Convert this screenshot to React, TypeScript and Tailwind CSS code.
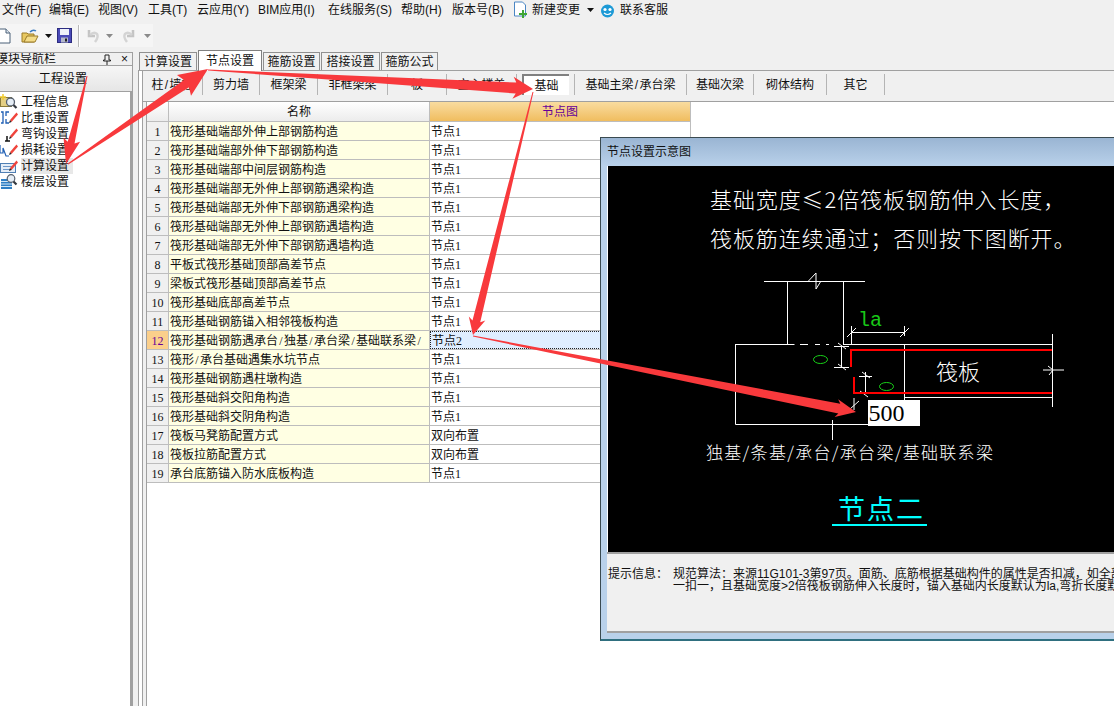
import React from 'react'

const MENUS = [
  { label: '文件(F)', w: 'w-[47px]' },
  { label: '编辑(E)', w: 'w-[49px]' },
  { label: '视图(V)', w: 'w-[50px]' },
  { label: '工具(T)', w: 'w-[49px]' },
  { label: '云应用(Y)', w: 'w-[61px]' },
  { label: 'BIM应用(I)', w: 'w-[70px]' },
  { label: '在线服务(S)', w: 'w-[73px]' },
  { label: '帮助(H)', w: 'w-[51px]' },
  { label: '版本号(B)', w: 'w-[61px]' },
]

const TREE = ['工程信息', '比重设置', '弯钩设置', '损耗设置', '计算设置', '楼层设置']

const TABS = [
  { label: '计算设置', w: 'w-[58px]' },
  { label: '节点设置', w: 'w-[64px]' },
  { label: '箍筋设置', w: 'w-[57px]' },
  { label: '搭接设置', w: 'w-[59px]' },
  { label: '箍筋公式', w: 'w-[57px]' },
]

const SUBTABS = [
  { label: '柱/墙柱', w: 'w-[60px]' },
  { label: '剪力墙', w: 'w-[57px]' },
  { label: '框架梁', w: 'w-[58px]' },
  { label: '非框架梁', w: 'w-[70px]' },
  { label: '板', w: 'w-[59px]' },
  { label: '空心楼盖', w: 'w-[70px]' },
  { label: '基础', w: 'w-[58px]', active: true },
  { label: '基础主梁/承台梁', w: 'w-[112px]' },
  { label: '基础次梁', w: 'w-[67px]' },
  { label: '砌体结构', w: 'w-[73px]' },
  { label: '其它', w: 'w-[58px]' },
]

const ROWS = [
  ['筏形基础端部外伸上部钢筋构造', '节点1'],
  ['筏形基础端部外伸下部钢筋构造', '节点1'],
  ['筏形基础端部中间层钢筋构造', '节点1'],
  ['筏形基础端部无外伸上部钢筋遇梁构造', '节点1'],
  ['筏形基础端部无外伸下部钢筋遇梁构造', '节点1'],
  ['筏形基础端部无外伸上部钢筋遇墙构造', '节点1'],
  ['筏形基础端部无外伸下部钢筋遇墙构造', '节点1'],
  ['平板式筏形基础顶部高差节点', '节点1'],
  ['梁板式筏形基础顶部高差节点', '节点1'],
  ['筏形基础底部高差节点', '节点1'],
  ['筏形基础钢筋锚入相邻筏板构造', '节点1'],
  ['筏形基础钢筋遇承台/独基/承台梁/基础联系梁/', '节点2'],
  ['筏形/承台基础遇集水坑节点', '节点1'],
  ['筏形基础钢筋遇柱墩构造', '节点1'],
  ['筏形基础斜交阳角构造', '节点1'],
  ['筏形基础斜交阴角构造', '节点1'],
  ['筏板马凳筋配置方式', '双向布置'],
  ['筏板拉筋配置方式', '双向布置'],
  ['承台底筋锚入防水底板构造', '节点1'],
]

// tapered markup arrow: hairline at the tail, fat at the neck
const arrowPoints = (x0: number, y0: number, x1: number, y1: number, neck = 6, head = 18, len = 20) => {
  const d = Math.hypot(x1 - x0, y1 - y0)
  const ux = (x1 - x0) / d
  const uy = (y1 - y0) / d
  const nx = -uy
  const ny = ux
  const bx = x1 - ux * len
  const by = y1 - uy * len
  const p = (x: number, y: number, s: number) => `${x + nx * s},${y + ny * s}`
  return [
    p(x0, y0, 0.5),
    p(bx, by, neck / 2),
    p(bx - ux * 3, by - uy * 3, head / 2),
    `${x1},${y1}`,
    p(bx - ux * 3, by - uy * 3, -head / 2),
    p(bx, by, -neck / 2),
    p(x0, y0, -0.5),
  ].join(' ')
}

// slashes are half an em wide in the app's font
const Slashed = ({ text }: { text: string }) => (
  <>
    {text.split('/').map((part, i) => (
      <React.Fragment key={i}>
        {i > 0 && <span className="inline-block w-[6px] text-center">/</span>}
        {part}
      </React.Fragment>
    ))}
  </>
)

const Caret = ({ gray }: { gray?: boolean }) => (
  <svg width="7" height="4" viewBox="0 0 7 4"><path d="M0 0h7L3.500 4z" fill={gray ? '#8a8a8a' : '#111'} /></svg>
)

const TreeIcon = ({ i }: { i: number }) => {
  const pencil = (
    <>
      <path d="M10 10 16.500 2.500 18 4.500 11.500 12z" fill="#f0443c" />
      <path d="m9 13 1-3 1.500 2z" fill="#222" />
    </>
  )
  if (i === 0) {
    return (
      <svg width="18" height="16" viewBox="0 0 18 16">
        <rect x="0.500" y="3.500" width="11" height="9" fill="#e4cf84" stroke="#8a7a3a" />
        <path d="M3 0v6M0 3h6" stroke="#f2cc30" strokeWidth="1.500" />
        <circle cx="10.500" cy="8" r="4" fill="#e6eef6" stroke="#56606e" strokeWidth="1.300" />
        <path d="m13.500 11 3 3" stroke="#33383f" strokeWidth="2.200" />
      </svg>
    )
  }
  if (i === 1) {
    return (
      <svg width="18" height="16" viewBox="0 0 18 16">
        <path d="M1 2h2v11H1M9 2H6v4M6 9v4h3" fill="none" stroke="#1f5fb4" strokeWidth="1.300" />
        {pencil}
      </svg>
    )
  }
  if (i === 2) {
    return (
      <svg width="18" height="16" viewBox="0 0 18 16">
        <path d="M7 10v5M5 15h5" fill="none" stroke="#111" strokeWidth="1.500" />
        {pencil}
      </svg>
    )
  }
  if (i === 3) {
    return (
      <svg width="18" height="16" viewBox="0 0 18 16">
        <path d="M0 3v8h3V6l3 8h3" fill="none" stroke="#1f5fb4" strokeWidth="1.200" />
        {pencil}
      </svg>
    )
  }
  if (i === 4) {
    return (
      <svg width="18" height="16" viewBox="0 0 18 16">
        <rect x="0.500" y="5.500" width="15" height="9" fill="#e4edf7" stroke="#4f7fb4" />
        <path d="M3 8.500h9M3 11.500h9" stroke="#6c97c8" />
        {pencil}
      </svg>
    )
  }
  return (
    <svg width="18" height="16" viewBox="0 0 18 16">
      <path d="M1 5h11v10H1z" fill="#2f7fc4" />
      <path d="M1 7.500h11M1 10h11M1 12.500h11" stroke="#d4e8f6" />
      <circle cx="11" cy="4.500" r="3.800" fill="#e6eef6" stroke="#56606e" strokeWidth="1.200" />
      <path d="m13.500 7.500 3 3" stroke="#33383f" strokeWidth="2.200" />
    </svg>
  )
}

const MenuBar = () => (
  <div className="flex h-[20px] items-center pl-[2px] text-[12px] text-[#111]">
    {MENUS.map(m => (
      <div key={m.label} className={`${m.w} whitespace-nowrap`}>{m.label}</div>
    ))}
    <svg width="15" height="18" viewBox="0 0 15 18">
      <path d="M1.500 1h8l3 3v11h-11z" fill="#fff" stroke="#4a86c4" />
      <path d="M6 12h3V9h2v3h3v2h-3v3H9v-3H6z" fill="#3fa535" />
    </svg>
    <div className="ml-[4px] w-[48px] whitespace-nowrap">新建变更</div>
    <div className="ml-[7px]"><Caret /></div>
    <svg className="ml-[6px]" width="15" height="15" viewBox="0 0 15 15">
      <circle cx="7.500" cy="8" r="6.500" fill="#1d9ad6" />
      <circle cx="5" cy="6.500" r="1.600" fill="#fff" />
      <circle cx="10" cy="6.500" r="1.600" fill="#fff" />
      <path d="M4 10q3.500 3 7 0" fill="none" stroke="#fff" strokeWidth="1.200" />
    </svg>
    <div className="ml-[5px] whitespace-nowrap">联系客服</div>
  </div>
)

const ToolBar = () => (
  <div className="mt-[4px] flex h-[23px] w-[153px] items-center bg-[#f5f5f5]">
    <svg className="ml-[-3px]" width="14" height="16" viewBox="0 0 14 16">
      <path d="M1 1h8l4 4v10H1z" fill="#fff" stroke="#4a6078" />
      <path d="M9 1v4h4" fill="#dfe6ee" stroke="#4a6078" />
    </svg>
    <svg className="ml-[10px]" width="18" height="16" viewBox="0 0 18 16">
      <path d="M1 5h5l1 1h6v8H1z" fill="#e8c860" stroke="#9a7a28" />
      <path d="M3 14 6 8h11l-3 6z" fill="#f4dc88" stroke="#9a7a28" />
      <path d="M9 4q3-3 6-1" fill="none" stroke="#3a7ac0" strokeWidth="1.500" />
    </svg>
    <div className="ml-[6px]"><Caret /></div>
    <svg className="ml-[5px]" width="15" height="15" viewBox="0 0 15 15">
      <rect x="0.500" y="0.500" width="14" height="14" fill="#4a4ab8" stroke="#2c2c80" />
      <rect x="3" y="1" width="9" height="6" fill="#eef1fa" />
      <rect x="4" y="9.500" width="7" height="5" fill="#b4b8cc" />
      <rect x="8" y="10.500" width="2" height="3" fill="#222" />
    </svg>
    <div className="ml-[6px] h-[22px] w-[2px] border-l border-[#b8b8b8] bg-white" />
    <svg className="ml-[7px]" width="14" height="14" viewBox="0 0 14 14">
      <path d="M2 1v6h6" fill="none" stroke="#c4c4c4" strokeWidth="2.500" />
      <path d="M3 6q4-4 7-1 2 3-2 8" fill="none" stroke="#d4d4d4" strokeWidth="2.500" />
    </svg>
    <div className="ml-[5px]"><Caret gray /></div>
    <svg className="ml-[8px]" width="14" height="14" viewBox="0 0 14 14">
      <path d="M12 1v6H6" fill="none" stroke="#c4c4c4" strokeWidth="2.500" />
      <path d="M11 6Q7 2 4 5q-2 3 2 8" fill="none" stroke="#d4d4d4" strokeWidth="2.500" />
    </svg>
    <div className="ml-[9px]"><Caret gray /></div>
  </div>
)

const NavPanel = () => (
  <div className="flex h-full w-[133px] shrink-0 flex-col border-r border-[#a0a0a0]">
    <div className="flex h-[14px] items-center overflow-hidden border-y border-[#a0a0a0] text-[12px]">
      <span className="ml-[-4px] w-[106px] whitespace-nowrap">模块导航栏</span>
      <svg width="10" height="11" viewBox="0 0 10 11">
        <path d="M3 1h4v5h1.500v1h-7V6H3zM5 7v4" fill="none" stroke="#222" />
      </svg>
      <span className="ml-[9px] text-[12px] leading-none">×</span>
    </div>
    <div className="flex h-[25px] items-center justify-center pr-[6px] text-[12px] tracking-[0.1px] bg-gradient-to-b from-[#f6f6f6] to-[#e6e6e6]">
      工程设置
    </div>
    <div className="flex-1 border-t border-r-2 border-[#a0a0a0] bg-white pt-[2px] text-[12px]">
      {TREE.map((t, i) => (
        <div key={t} className="flex h-[16px] items-center">
          <div className="flex w-[21px] shrink-0"><TreeIcon i={i} /></div>
          <span className={i === 4 ? 'bg-[#e8e8e8] pr-[4px] leading-[16px]' : 'leading-[16px]'}>{t}</span>
        </div>
      ))}
    </div>
  </div>
)

const Tabs = () => (
  <div className="flex h-[18px] items-end gap-[1px] pl-[6px]">
    {TABS.map(t =>
      t.label === '节点设置' ? (
        <div key={t.label} className={`${t.w} z-10 mb-[-1px] flex h-[21px] shrink-0 items-center justify-center border border-b-0 border-[#808080] bg-white text-[12px]`}>
          {t.label}
        </div>
      ) : (
        <div key={t.label} className={`${t.w} flex h-[18px] shrink-0 items-center justify-center border border-b-0 border-[#909090] bg-[#f0f0f0] text-[12px]`}>
          {t.label}
        </div>
      ),
    )}
  </div>
)

const SubTabs = () => (
  <div className="flex h-[31px] items-start border-b border-[#a0a0a0] pt-[3px]">
    {SUBTABS.map(s => (
      <div key={s.label} className={`${s.w} flex h-[21px] shrink-0 items-center justify-center border-r border-[#b4b4b4] text-[12px]`}>
        {s.active ? (
          <div className="flex h-[21px] w-[47px] items-center justify-center border-2 border-b-0 border-r-0 border-[#808080] bg-white">{s.label}</div>
        ) : <span><Slashed text={s.label} /></span>}
      </div>
    ))}
  </div>
)

const Grid = () => (
  <div className="w-[544px] text-[12px]" style={{ fontFamily: '"Liberation Serif", "Noto Sans CJK SC", serif' }}>
    <div className="grid h-[20px] grid-cols-[22px_261px_261px] border-b border-[#bdbdbd]">
      <div className="border-r border-[#bdbdbd] bg-gradient-to-b from-white to-[#ececec]" />
      <div className="flex items-center justify-center border-r border-[#bdbdbd] bg-gradient-to-b from-white to-[#ececec] pt-[1px]">名称</div>
      <div className="flex items-center justify-center border-r border-[#bdbdbd] bg-gradient-to-b from-[#f9dc9f] to-[#f0bd5e] pt-[1px] text-[#660099]">节点图</div>
    </div>
    {ROWS.map((r, i) => {
      const sel = i === 11
      return (
        <div key={i} className="grid h-[19px] grid-cols-[22px_261px_261px] grid-rows-[18px] border-b border-[#bdbdbd]">
          <div className={`flex items-center justify-center border-r border-[#bdbdbd] pt-[1px] ${sel ? 'bg-[#fbcf8b] text-[#660099]' : 'bg-[#f0f0f0]'}`}>{i + 1}</div>
          <div className="h-[18px] overflow-hidden whitespace-nowrap border-r border-[#bdbdbd] bg-[#ffffe3] pl-[1px] pt-[1px] leading-[18px]"><Slashed text={r[0]} /></div>
          <div className={`flex items-center pl-[1px] pt-[1px] ${sel ? 'border border-dotted border-[#222] bg-[#dfeeff]' : 'border-r border-[#bdbdbd]'}`}>{r[1]}</div>
        </div>
      )
    })}
  </div>
)

const Drawing = () => (
  <svg width="506" height="178" viewBox="608 262 506 178" className="block shrink-0">
    <g stroke="#fff" fill="none">
      <path d="M764 281.500h101M787.500 281v63M843.500 281v63" />
      <path d="M808 281.500 816 273v16l5-8" />
      <path d="M735.500 344v80.500h133M735.500 344.500h59M843 344.500h209.500M800 344.500h8M815 344.500h5M826 344.500h3" />
      <path d="M904.500 344v56M905 397.500h147M1052.500 334v73" />
      <path d="M851.500 332.500h53M851.500 326v18M904.500 326v10M847 337l9-9M900 337l9-9" />
      <path d="M834 346.500h15M834 367.500h15M841.500 346v21M838 343l8 6M838 364l8 6" />
      <path d="M859 376.500h13M859 393.500h13M865.500 372v22M862 372l8 6M860 391l8 6" />
      <path d="M854 398v12M850 409l9-8" />
      <path d="M1043 370h21M1048 366l5 4-4 5" />
      <path d="M832.500 420v20" />
    </g>
    <g stroke="#ff0000" strokeWidth="2" fill="none">
      <path d="M851 367v-17h201" />
      <path d="M854 377v16h198" />
    </g>
    <ellipse cx="820.500" cy="359.500" rx="7" ry="4" stroke="#18d018" fill="none" />
    <ellipse cx="886.500" cy="386.500" rx="7" ry="4" stroke="#18d018" fill="none" />
    <text x="870" y="326" textAnchor="middle" fontSize="20" fill="#18c818" fontFamily="Liberation Mono, monospace">la</text>
    <text x="958" y="380" textAnchor="middle" fontSize="22" fontWeight="300" fill="#fff" fontFamily="Noto Sans CJK SC, sans-serif">筏板</text>
    <rect x="868" y="400" width="52" height="26" fill="#fff" />
    <text x="868.500" y="421" fontSize="24" fill="#000" fontFamily="Liberation Serif, serif">500</text>
  </svg>
)

const NodeDialog = () => (
  <div className="absolute left-[600px] top-[137px] z-10 flex h-[504px] w-[514px] flex-col overflow-hidden border-l border-t border-b-2 border-[#3a4a50] border-b-[#2f6f7f] bg-[#b9d1ea] pl-[6px]">
    <div className="ml-[-6px] flex h-[28px] shrink-0 items-center bg-gradient-to-b from-[#9ab5d3] to-[#b9d1ea] pl-[6px] text-[12px] text-[#111]">
      节点设置示意图
    </div>
    <div
      className="flex h-[386px] shrink-0 flex-col items-start border-l border-white bg-black text-white"
      style={{ fontFamily: '"Noto Sans CJK SC", sans-serif' }}
    >
      <div className="pb-[5px] pl-[102px] pt-[13px] text-[22px] font-light leading-[39px] tracking-[0.9px] whitespace-nowrap">
        <p>基础宽度≤2倍筏板钢筋伸入长度，</p>
        <p>筏板筋连续通过；否则按下图断开。</p>
      </div>
      <Drawing />
      <p className="ml-[98px] text-[17px] font-light leading-[24px] tracking-[1.3px] whitespace-nowrap">独基/条基/承台/承台梁/基础联系梁</p>
      <p className="ml-[224px] mt-[28px] border-b-2 border-[#00ffff] pl-[6px] pr-[2px] text-[27px] leading-[32px] tracking-[2px] text-[#00ffff] whitespace-nowrap">节点二</p>
    </div>
    <div className="flex h-[81px] shrink-0 border-y-2 border-[#a0a0a0] bg-[#f0f0f0] pl-[1px] pt-[14px] text-[12px] leading-[12px] whitespace-nowrap">
      <div className="w-[65px] shrink-0">提示信息：</div>
      <div>
        <p>规范算法：来源11G101-3第97页。面筋、底筋根据基础构件的属性是否扣减，如全部</p>
        <p>一扣一，且基础宽度&gt;2倍筏板钢筋伸入长度时，锚入基础内长度默认为la,弯折长度默</p>
      </div>
    </div>
  </div>
)

const App: React.FC = () => (
  <div
    className="relative flex h-[706px] w-[1114px] flex-col overflow-hidden bg-[#f0f0f0] text-[#111]"
    style={{ fontFamily: '"Liberation Sans", "Noto Sans CJK SC", sans-serif' }}
  >
    <MenuBar />
    <ToolBar />
    <div className="mt-[5px] flex min-h-0 flex-1">
      <NavPanel />
      <div className="flex min-w-0 flex-1 flex-col">
        <Tabs />
        <div className="ml-[5px] flex min-h-0 flex-1 flex-col border-l border-t border-[#a0a0a0] bg-white pl-[3px]">
          <div className="flex min-h-0 flex-1 flex-col border-l border-[#a0a0a0] bg-[#f0f0f0]">
            <SubTabs />
            <div className="ml-[3px] flex-1 border-l border-[#a0a0a0] bg-white">
              <Grid />
            </div>
          </div>
        </div>
      </div>
    </div>
    <NodeDialog />

    {/* markup arrows drawn over the screenshot */}
    <svg className="pointer-events-none absolute inset-0 z-20" width="1114" height="706" viewBox="0 0 1114 706">
      <g fill="#f8393c">
        <polygon points={arrowPoints(87, 76, 66, 164, 7, 17, 22)} />
        <polygon points={arrowPoints(68, 164, 208, 69, 9, 25, 26)} />
        <polygon points={arrowPoints(208, 70, 533, 89, 11, 22, 17)} />
        <polygon points={arrowPoints(533, 92, 473, 335, 8, 17, 14)} />
        <polygon points={arrowPoints(473, 336, 856, 412, 10, 18, 17)} />
      </g>
    </svg>
  </div>
)

export default App
